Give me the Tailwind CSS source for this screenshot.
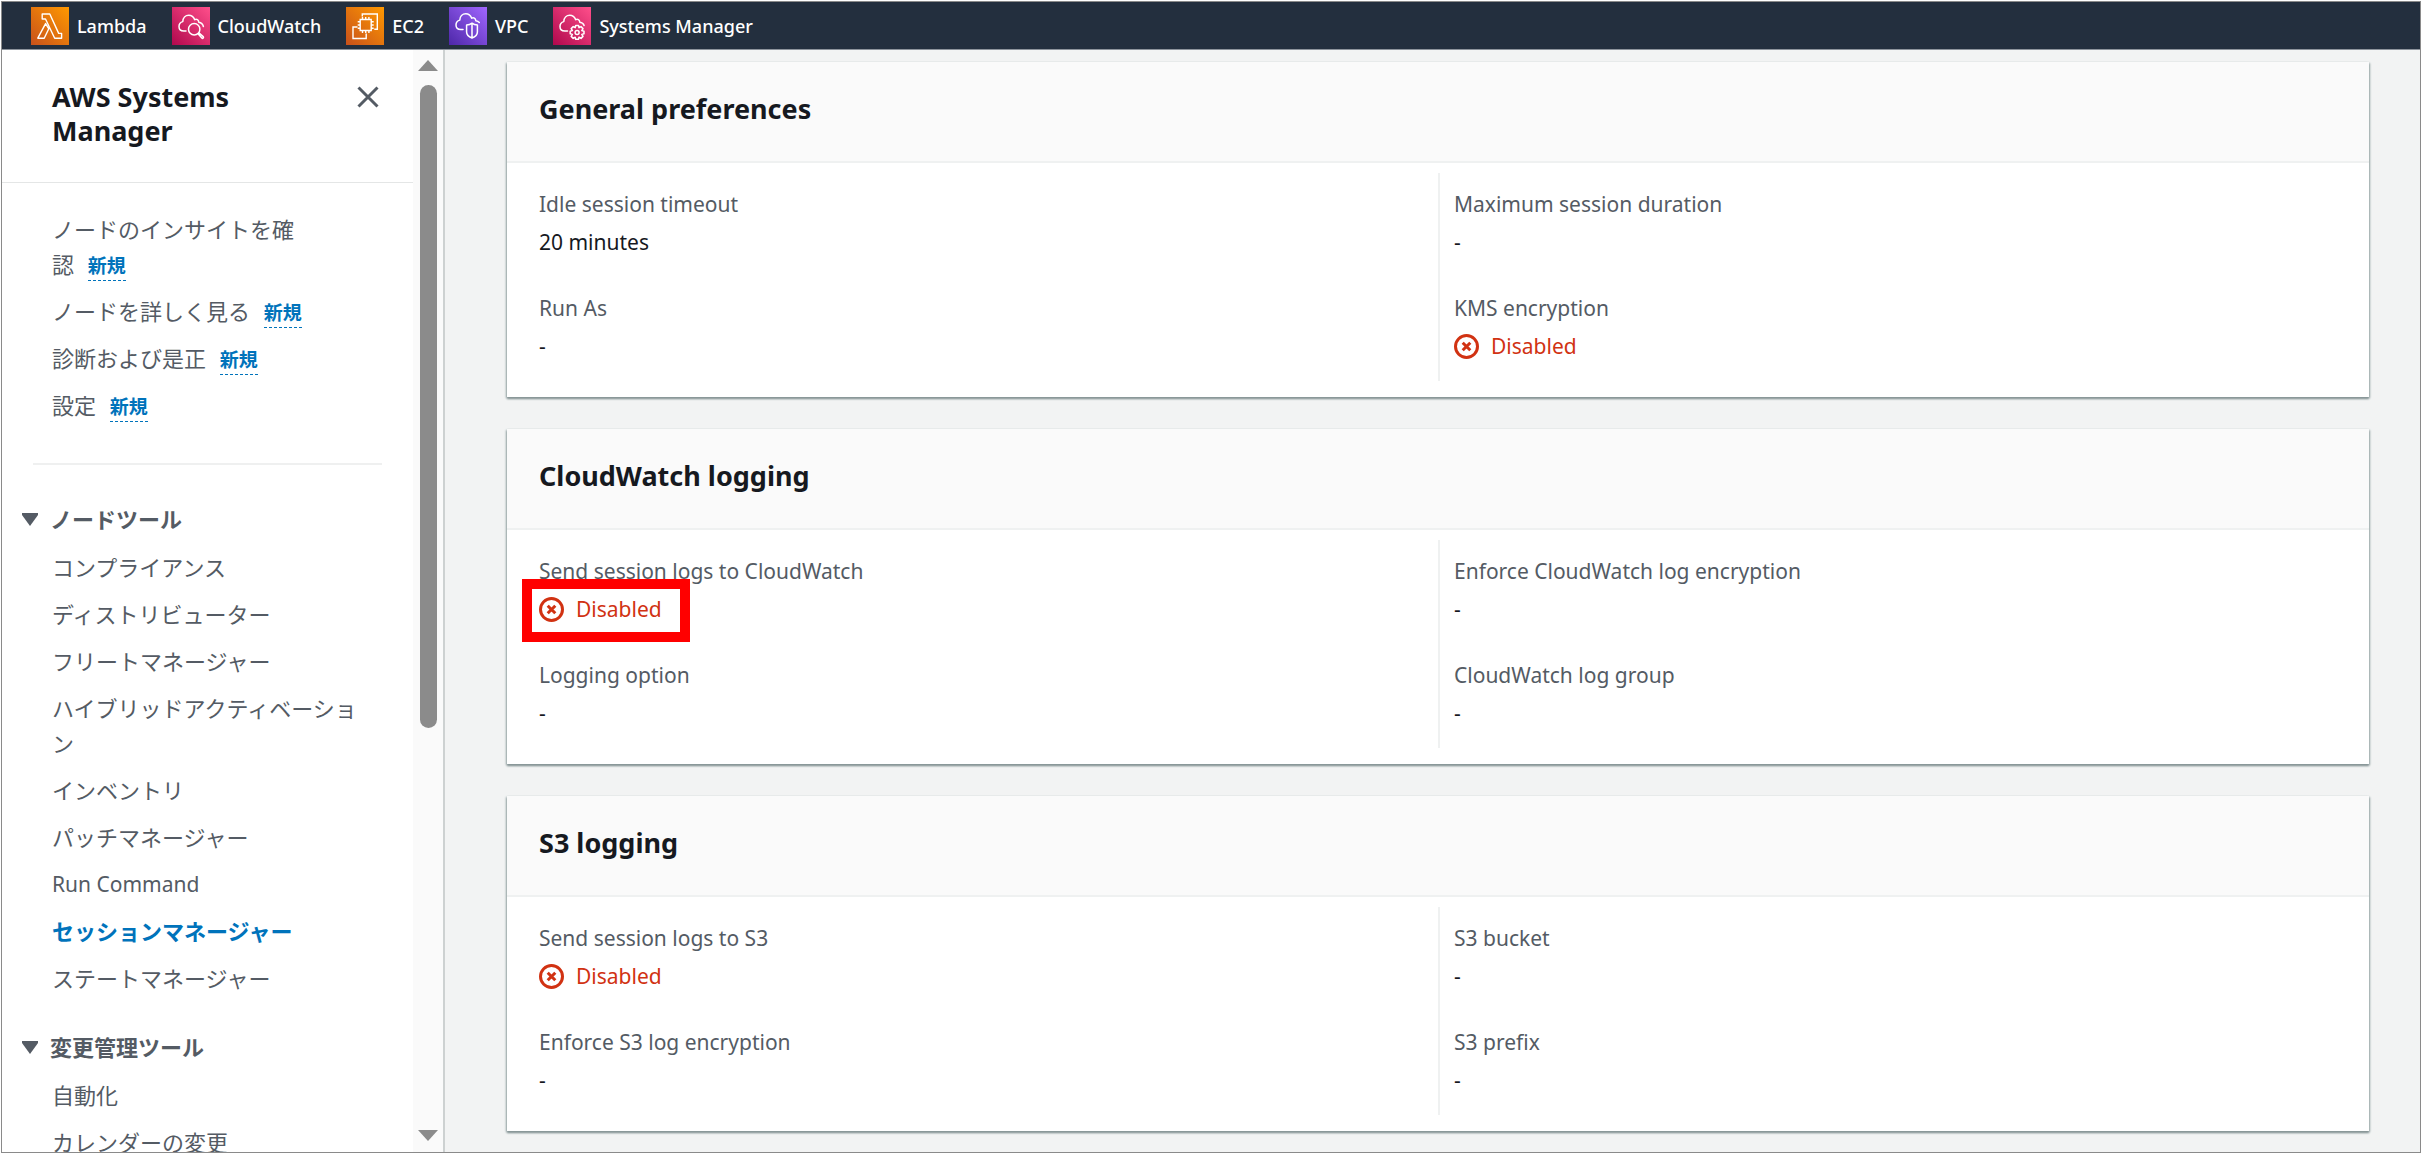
<!DOCTYPE html>
<html lang="ja">

<head>
  <meta charset="UTF-8" />
  <meta name="viewport" content="width=device-width, initial-scale=1.0" />
  <script src="https://cdn.jsdelivr.net/npm/@tailwindcss/browser@4"></script>
  <title>AWS Systems Manager</title>
</head>

<body class="h-screen overflow-hidden bg-white p-px font-['Noto_Sans','Noto_Sans_CJK_JP',sans-serif] text-[21px] leading-[34px] text-[#16191f]">
  <div class="flex h-full flex-col border border-[#8a8a8a]">
    <!-- Favorites bar -->
    <nav class="flex h-12 shrink-0 items-center gap-[25px] border-b border-[#8d949c] bg-[#232f3e] pl-[29px] text-[18px] font-medium text-white">
      <a href="#" class="flex items-center gap-2">
        <svg class="h-[38px] w-[38px]" viewBox="0 0 38 38" fill="none" aria-hidden="true">
          <defs>
            <linearGradient id="orange" x1="0" y1="1" x2="1" y2="0">
              <stop offset="0" stop-color="#c8511b" />
              <stop offset="1" stop-color="#ff9900" />
            </linearGradient>
            <linearGradient id="pink" x1="0" y1="1" x2="1" y2="0">
              <stop offset="0" stop-color="#b0084d" />
              <stop offset="1" stop-color="#ff4f8b" />
            </linearGradient>
            <linearGradient id="purple" x1="0" y1="1" x2="1" y2="0">
              <stop offset="0" stop-color="#4d27a8" />
              <stop offset="1" stop-color="#a166ff" />
            </linearGradient>
          </defs>
          <path fill="url(#orange)" d="M0 0h38v38H0z" />
          <path stroke="#fff" stroke-width="1.4" stroke-linejoin="round" d="M14.6 16.6 6.8 31.2h6.4l4.6-9.4zM11.2 7v5h3.3l9.2 19.2h6.9v-4.8h-2.9L18.8 7z" />
        </svg>
        Lambda
      </a>
      <a href="#" class="flex items-center gap-2">
        <svg class="h-[38px] w-[38px]" viewBox="0 0 38 38" fill="none" aria-hidden="true">
          <path fill="url(#pink)" d="M0 0h38v38H0z" />
          <g stroke="#fff" stroke-width="1.5" stroke-linecap="round" stroke-linejoin="round">
            <path d="M14 24h-2.2C8.8 24 7 22 7 19.5c0-2.600 1.600-4.300 3.800-4.900C10.900 11 13.400 8.300 16.800 8.300c3 0 4.900 1.900 5.900 4.400 1.900-1.200 3.900 0 4.100 2.600 2.400.4 4 1.800 4.600 4.200" />
            <circle cx="22.2" cy="22.2" r="5.7" />
            <path d="m26 26.800 3.800 4.200c1 .9 2.300-.4 1.400-1.400l-4.300-3.700" />
          </g>
        </svg>
        CloudWatch
      </a>
      <a href="#" class="flex items-center gap-2">
        <svg class="h-[38px] w-[38px]" viewBox="0 0 38 38" fill="none" aria-hidden="true">
          <path fill="url(#orange)" d="M0 0h38v38H0z" />
          <g stroke="#fff" stroke-width="1.4">
            <path d="M14.2 12.5h11v11h-11zM16.5 12.5V10M19.7 12.5V10M22.9 12.5V10M16.5 26v-2.500M19.7 26v-2.500M22.9 26v-2.500M14.2 14.8h-2.500M14.2 18h-2.500M14.2 21.2h-2.500M27.7 14.8h-2.500M27.7 18h-2.500M27.7 21.2h-2.500" />
            <path d="M16.3 9.5V7h15v15.300h-3M11.5 20H7v11.500h13.200v-5" />
          </g>
        </svg>
        EC2
      </a>
      <a href="#" class="flex items-center gap-2">
        <svg class="h-[38px] w-[38px]" viewBox="0 0 38 38" fill="none" aria-hidden="true">
          <path fill="url(#purple)" d="M0 0h38v38H0z" />
          <g stroke="#fff" stroke-width="1.5" stroke-linecap="round" stroke-linejoin="round">
            <path d="M14 22.500h-2.200C8.800 22.500 7 20.500 7 18c0-2.600 1.600-4.300 3.800-4.900C10.900 9.500 13.400 6.800 16.800 6.800c3 0 4.900 1.900 5.900 4.400 1.900-1.200 3.900 0 4.100 2.600 1.500.2 2.700.8 3.500 1.700" />
            <path d="M23 16.200c1.600 1.200 3.400 1.700 5.400 1.700v7c0 3-2 4.700-5.400 6.100-3.400-1.400-5.400-3.100-5.400-6.100v-7c2 0 3.800-.5 5.400-1.700zM23 16.200V31" />
          </g>
        </svg>
        VPC
      </a>
      <a href="#" class="flex items-center gap-2">
        <svg class="h-[38px] w-[38px]" viewBox="0 0 38 38" fill="none" aria-hidden="true">
          <path fill="url(#pink)" d="M0 0h38v38H0z" />
          <g stroke="#fff" stroke-width="1.5" stroke-linecap="round" stroke-linejoin="round">
            <path d="M14.500 24h-2.700C8.800 24 7 22 7 19.500c0-2.600 1.600-4.300 3.800-4.900C10.900 11 13.400 8.300 16.800 8.300c3 0 4.900 1.900 5.900 4.400 1.900-1.200 3.900 0 4.100 2.600 2.200.3 3.700 1.400 4.300 3.200" />
            <path d="M22.700 18.500h2.800l.5 2.200 2-1.100 2 2-1.200 2 2.200.6v2.600l-2.200.6 1.200 2-2 2-2-1.200-.5 2.100h-2.800l-.5-2.100-2 1.200-2-2 1.200-2-2.200-.6v-2.600l2.200-.6-1.200-2 2-2 2 1.100z" />
            <circle cx="24.1" cy="25.5" r="2" />
          </g>
        </svg>
        Systems Manager
      </a>
    </nav>

    <div class="flex min-h-0 flex-1">
      <!-- Side navigation -->
      <aside class="flex w-[443px] shrink-0 border-r-2 border-[#cdd1d1]">
        <div class="min-w-0 flex-1 overflow-hidden">
          <div class="flex items-start justify-between border-b border-[#e4e6e6] pt-[30px] pr-[34px] pb-[34px] pl-[50px]">
            <h2 class="w-52 text-[27px] font-bold">AWS Systems Manager</h2>
            <button type="button" class="mt-[6px] text-[#545b64]" aria-label="閉じる">
              <svg class="h-[22px] w-[22px]" viewBox="0 0 22 22" fill="none" stroke="currentColor" stroke-width="3" aria-hidden="true">
                <path d="m1.500 1.500 19 19m0-19-19 19" />
              </svg>
            </button>
          </div>

          <ul class="mx-[31px] flex flex-col gap-3 border-b-2 border-[#eff0f0] pt-[29px] pb-10 pl-[19px] text-[22px] leading-[35px] text-[#545b64]">
            <li><a href="#">ノードのインサイトを確<br />認</a> <a href="#" class="ml-2 inline-block border-b border-dashed border-[#0073bb] text-[19px] leading-7 font-bold text-[#0073bb]">新規</a></li>
            <li><a href="#">ノードを詳しく見る</a> <a href="#" class="ml-2 inline-block border-b border-dashed border-[#0073bb] text-[19px] leading-7 font-bold text-[#0073bb]">新規</a></li>
            <li><a href="#">診断および是正</a> <a href="#" class="ml-2 inline-block border-b border-dashed border-[#0073bb] text-[19px] leading-7 font-bold text-[#0073bb]">新規</a></li>
            <li><a href="#">設定</a> <a href="#" class="ml-2 inline-block border-b border-dashed border-[#0073bb] text-[19px] leading-7 font-bold text-[#0073bb]">新規</a></li>
          </ul>

          <div class="pt-[37px] pr-11 pl-5 text-[22px] leading-[35px] text-[#545b64]">
            <button type="button" class="flex items-center gap-3 font-bold" aria-expanded="true">
              <svg class="h-[13px] w-4" viewBox="0 0 16 13" fill="currentColor" aria-hidden="true">
                <path d="M0 0h16v2L8 13 0 2z" />
              </svg>
              ノードツール
            </button>
            <ul class="mt-[13px] flex flex-col gap-3 pl-[30px]">
              <li><a href="#">コンプライアンス</a></li>
              <li><a href="#">ディストリビューター</a></li>
              <li><a href="#">フリートマネージャー</a></li>
              <li><a href="#">ハイブリッドアクティベーション</a></li>
              <li><a href="#">インベントリ</a></li>
              <li><a href="#">パッチマネージャー</a></li>
              <li class="text-[21px]"><a href="#">Run Command</a></li>
              <li><a href="#" class="font-bold text-[#0073bb]" aria-current="page">セッションマネージャー</a></li>
              <li><a href="#">ステートマネージャー</a></li>
            </ul>
            <button type="button" class="mt-[34px] flex items-center gap-3 font-bold" aria-expanded="true">
              <svg class="h-[13px] w-4" viewBox="0 0 16 13" fill="currentColor" aria-hidden="true">
                <path d="M0 0h16v2L8 13 0 2z" />
              </svg>
              変更管理ツール
            </button>
            <ul class="mt-[13px] flex flex-col gap-3 pl-[30px]">
              <li><a href="#">自動化</a></li>
              <li><a href="#">カレンダーの変更</a></li>
            </ul>
          </div>
        </div>

        <!-- Scrollbar -->
        <div class="flex w-[30px] shrink-0 flex-col items-center bg-[#fafafa] pt-[10px] pb-[11px]" aria-hidden="true">
          <svg class="h-[11px] w-5 shrink-0" viewBox="0 0 20 11" fill="#8b8b8b">
            <path d="M10 0 20 11H0z" />
          </svg>
          <div class="mt-[14px] flex-1">
            <div class="h-[61.5%] w-[17px] rounded-full bg-[#8b8b8b]"></div>
          </div>
          <svg class="h-[11px] w-5 shrink-0" viewBox="0 0 20 11" fill="#8b8b8b">
            <path d="M0 0h20L10 11z" />
          </svg>
        </div>
      </aside>

      <!-- Session preferences -->
      <main class="flex min-w-0 flex-1 flex-col gap-8 overflow-hidden bg-[#f2f3f3] pt-3 pr-[51px] pl-[62px]">
        <section class="shrink-0 bg-white shadow-[0_2px_2px_0_#879596,1px_1px_2px_0_#aab7b8,-1px_1px_2px_0_#aab7b8]">
          <h2 class="border-b-2 border-[#eff1f1] bg-[#fafafa] px-8 pt-[30px] pb-[35px] text-[27px] font-bold">General preferences</h2>
          <div class="grid grid-cols-2 pt-[10px] pb-4">
            <dl class="flex flex-col gap-8 px-8 pt-[14px] pb-[18px]">
              <div>
                <dt class="text-[#545b64]">Idle session timeout</dt>
                <dd class="mt-1">20 minutes</dd>
              </div>
              <div>
                <dt class="text-[#545b64]">Run As</dt>
                <dd class="mt-1">-</dd>
              </div>
            </dl>
            <dl class="flex flex-col gap-8 border-l-2 border-[#eff1f1] px-[14px] pt-[14px] pb-[18px]">
              <div>
                <dt class="text-[#545b64]">Maximum session duration</dt>
                <dd class="mt-1">-</dd>
              </div>
              <div>
                <dt class="text-[#545b64]">KMS encryption</dt>
                <dd class="mt-1 flex items-center gap-3 text-[#d13212]">
                  <svg class="h-[25px] w-[25px]" viewBox="0 0 25 25" fill="none" stroke="currentColor" stroke-width="3" aria-hidden="true">
                    <circle cx="12.5" cy="12.5" r="11" />
                    <path d="m8.700 8.700 7.600 7.600m0-7.600-7.600 7.600" />
                  </svg>
                  Disabled
                </dd>
              </div>
            </dl>
          </div>
        </section>

        <section class="shrink-0 bg-white shadow-[0_2px_2px_0_#879596,1px_1px_2px_0_#aab7b8,-1px_1px_2px_0_#aab7b8]">
          <h2 class="border-b-2 border-[#eff1f1] bg-[#fafafa] px-8 pt-[30px] pb-[35px] text-[27px] font-bold">CloudWatch logging</h2>
          <div class="grid grid-cols-2 pt-[10px] pb-4">
            <dl class="flex flex-col gap-8 px-8 pt-[14px] pb-[18px]">
              <div>
                <dt class="text-[#545b64]">Send session logs to CloudWatch</dt>
                <dd class="relative mt-1 flex items-center gap-3 text-[#d13212]">
                  <svg class="h-[25px] w-[25px]" viewBox="0 0 25 25" fill="none" stroke="currentColor" stroke-width="3" aria-hidden="true">
                    <circle cx="12.5" cy="12.5" r="11" />
                    <path d="m8.700 8.700 7.600 7.600m0-7.600-7.600 7.600" />
                  </svg>
                  Disabled
                  <!-- Highlight frame -->
                  <span class="absolute -top-[13px] -left-[17px] h-[63px] w-[168px] border-10 border-[#ff0000]"></span>
                </dd>
              </div>
              <div>
                <dt class="text-[#545b64]">Logging option</dt>
                <dd class="mt-1">-</dd>
              </div>
            </dl>
            <dl class="flex flex-col gap-8 border-l-2 border-[#eff1f1] px-[14px] pt-[14px] pb-[18px]">
              <div>
                <dt class="text-[#545b64]">Enforce CloudWatch log encryption</dt>
                <dd class="mt-1">-</dd>
              </div>
              <div>
                <dt class="text-[#545b64]">CloudWatch log group</dt>
                <dd class="mt-1">-</dd>
              </div>
            </dl>
          </div>
        </section>

        <section class="shrink-0 bg-white shadow-[0_2px_2px_0_#879596,1px_1px_2px_0_#aab7b8,-1px_1px_2px_0_#aab7b8]">
          <h2 class="border-b-2 border-[#eff1f1] bg-[#fafafa] px-8 pt-[30px] pb-[35px] text-[27px] font-bold">S3 logging</h2>
          <div class="grid grid-cols-2 pt-[10px] pb-4">
            <dl class="flex flex-col gap-8 px-8 pt-[14px] pb-[18px]">
              <div>
                <dt class="text-[#545b64]">Send session logs to S3</dt>
                <dd class="mt-1 flex items-center gap-3 text-[#d13212]">
                  <svg class="h-[25px] w-[25px]" viewBox="0 0 25 25" fill="none" stroke="currentColor" stroke-width="3" aria-hidden="true">
                    <circle cx="12.5" cy="12.5" r="11" />
                    <path d="m8.700 8.700 7.600 7.600m0-7.600-7.600 7.600" />
                  </svg>
                  Disabled
                </dd>
              </div>
              <div>
                <dt class="text-[#545b64]">Enforce S3 log encryption</dt>
                <dd class="mt-1">-</dd>
              </div>
            </dl>
            <dl class="flex flex-col gap-8 border-l-2 border-[#eff1f1] px-[14px] pt-[14px] pb-[18px]">
              <div>
                <dt class="text-[#545b64]">S3 bucket</dt>
                <dd class="mt-1">-</dd>
              </div>
              <div>
                <dt class="text-[#545b64]">S3 prefix</dt>
                <dd class="mt-1">-</dd>
              </div>
            </dl>
          </div>
        </section>
      </main>
    </div>
  </div>
</body>

</html>
